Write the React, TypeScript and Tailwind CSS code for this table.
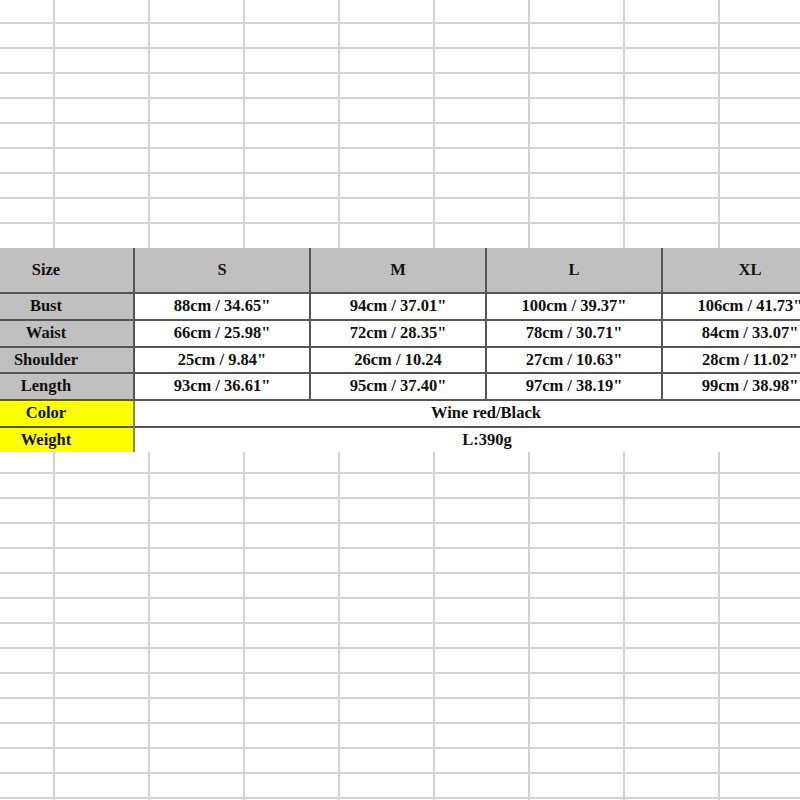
import React from "react";

const colsTop = [55, 95, 95, 95, 95, 95, 95, 95, 95];

function GridArea({ rows, lastNoBorder }: { rows: number[]; lastNoBorder?: boolean }) {
  return (
    <div className="flex flex-col overflow-hidden">
      {rows.map((h, ri) => (
        <div key={ri} className="flex shrink-0" style={{ height: h }}>
          {colsTop.map((w, ci) => (
            <div
              key={ci}
              className={`shrink-0 border-r-2 border-[#d3d3d3] ${
                lastNoBorder && ri === rows.length - 1 ? "" : "border-b-2"
              }`}
              style={{ width: w }}
            />
          ))}
        </div>
      ))}
    </div>
  );
}

const data: [string, string[], string][] = [
  ["Bust", ["88cm / 34.65\"", "94cm / 37.01\"", "100cm / 39.37\"", "106cm / 41.73\""], "h-[27px]"],
  ["Waist", ["66cm / 25.98\"", "72cm / 28.35\"", "78cm / 30.71\"", "84cm / 33.07\""], "h-[27px]"],
  ["Shoulder", ["25cm / 9.84\"", "26cm / 10.24", "27cm / 10.63\"", "28cm / 11.02\""], "h-[26px]"],
  ["Length", ["93cm / 36.61\"", "95cm / 37.40\"", "97cm / 38.19\"", "99cm / 38.98\""], "h-[27px]"],
];

export default function App() {
  const top = [24, 25, 25, 25, 25, 25, 25, 25, 25, 24];
  const bottom = [22, 25, 25, 25, 25, 25, 25, 25, 25, 25, 25, 25, 25, 25, 4];
  const cell = "flex items-center justify-center border-r-2 border-b-2 border-[#555555]";
  return (
    <div
      className="w-[800px] h-[800px] overflow-hidden bg-white text-[#111111] flex flex-col"
      style={{ fontFamily: '"Liberation Serif", "Times New Roman", serif' }}
    >
      <div className="h-[248px] shrink-0 overflow-hidden">
        <GridArea rows={top} lastNoBorder />
      </div>
      <div className="h-[204px] shrink-0 overflow-hidden">
        <div className="ml-[-41px] w-[880px] grid grid-cols-[176px_176px_176px_176px_176px] text-[16.5px] font-bold leading-none">
          <div className={`${cell} h-[46px] bg-[#c0c0c0]`}>Size</div>
          {["S", "M", "L", "XL"].map((s) => (
            <div key={s} className={`${cell} h-[46px] bg-[#c0c0c0]`}>
              {s}
            </div>
          ))}
          {data.map(([label, vals, h]) => (
            <React.Fragment key={label}>
              <div className={`${cell} ${h} bg-[#c0c0c0]`}>{label}</div>
              {vals.map((v, i) => (
                <div key={i} className={`${cell} ${h} bg-white whitespace-nowrap`}>
                  {v}
                </div>
              ))}
            </React.Fragment>
          ))}
          <div className={`${cell} h-[27px] bg-[#ffff00] border-r-[#8a8a5a]`}>Color</div>
          <div className={`${cell} h-[27px] col-span-4 border-r-0`}>Wine red/Black</div>
          <div className="flex items-center justify-center h-[24px] bg-[#ffff00] border-r-2 border-[#8a8a5a]">Weight</div>
          <div className="flex items-center justify-center h-[24px] col-span-4">L:390g</div>
        </div>
      </div>
      <div className="flex-1 overflow-hidden">
        <GridArea rows={bottom} lastNoBorder />
      </div>
    </div>
  );
}
